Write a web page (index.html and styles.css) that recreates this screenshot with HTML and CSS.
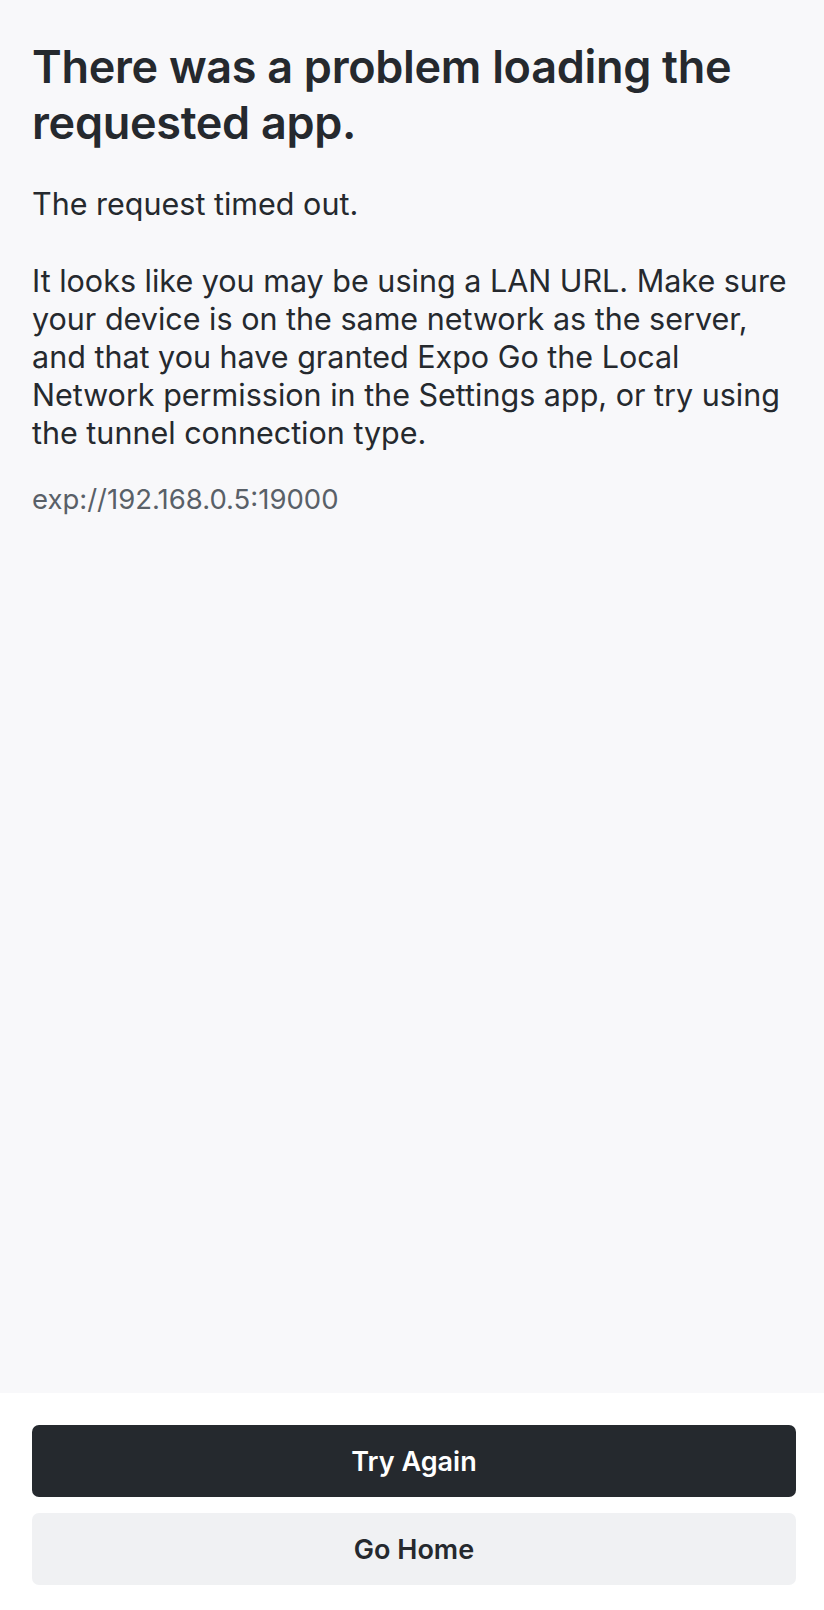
FILE: index.html
```html
<!DOCTYPE html>
<html>
<head>
<meta charset="utf-8">
<link rel="stylesheet" href="styles.css">
</head>
<body>
<div class="screen">
  <main class="content">
    <h1 class="title">There was a problem loading the requested app.</h1>
    <p class="message first">The request timed out.</p>
    <p class="message second">It looks like you may be using a LAN URL. Make sure your device is on the same network as the server, and that you have granted Expo Go the Local Network permission in the Settings app, or try using the tunnel connection type.</p>
    <p class="url">exp://192.168.0.5:19000</p>
  </main>
  <footer class="actions">
    <button class="btn btn-primary">Try Again</button>
    <button class="btn btn-secondary">Go Home</button>
  </footer>
</div>
</body>
</html>
```

FILE: styles.css
```css
html, body {
  margin: 0;
  padding: 0;
}
body {
  font-family: Inter, "Noto Sans", sans-serif;
  color: #25292e;
  background: #f8f8fa;
}
.screen {
  display: flex;
  flex-direction: column;
  height: 1610px;
}
.content {
  flex: 1;
  padding: 39px 28px 0 32px;
}
.title {
  margin: 0;
  font-size: 45px;
  line-height: 56px;
  font-weight: 600;
  letter-spacing: -0.3px;
}
.message {
  margin: 0;
  font-size: 30.5px;
  line-height: 38px;
  font-weight: 400;
}
.message.first {
  margin-top: 34px;
}
.message.second {
  margin-top: 39px;
}
.url {
  margin: 30px 0 0 0;
  font-size: 27.5px;
  line-height: 34px;
  color: #596068;
}
.actions {
  background: #ffffff;
  padding: 32px 28px 25px 32px;
  display: flex;
  flex-direction: column;
  gap: 16px;
}
.btn {
  height: 72px;
  border: none;
  border-radius: 7px;
  font-family: Inter, "Noto Sans", sans-serif;
  font-size: 27px;
  font-weight: 600;
}
.btn-primary {
  background: #25292e;
  color: #ffffff;
}
.btn-secondary {
  background: #f0f1f3;
  color: #25292e;
}
```
